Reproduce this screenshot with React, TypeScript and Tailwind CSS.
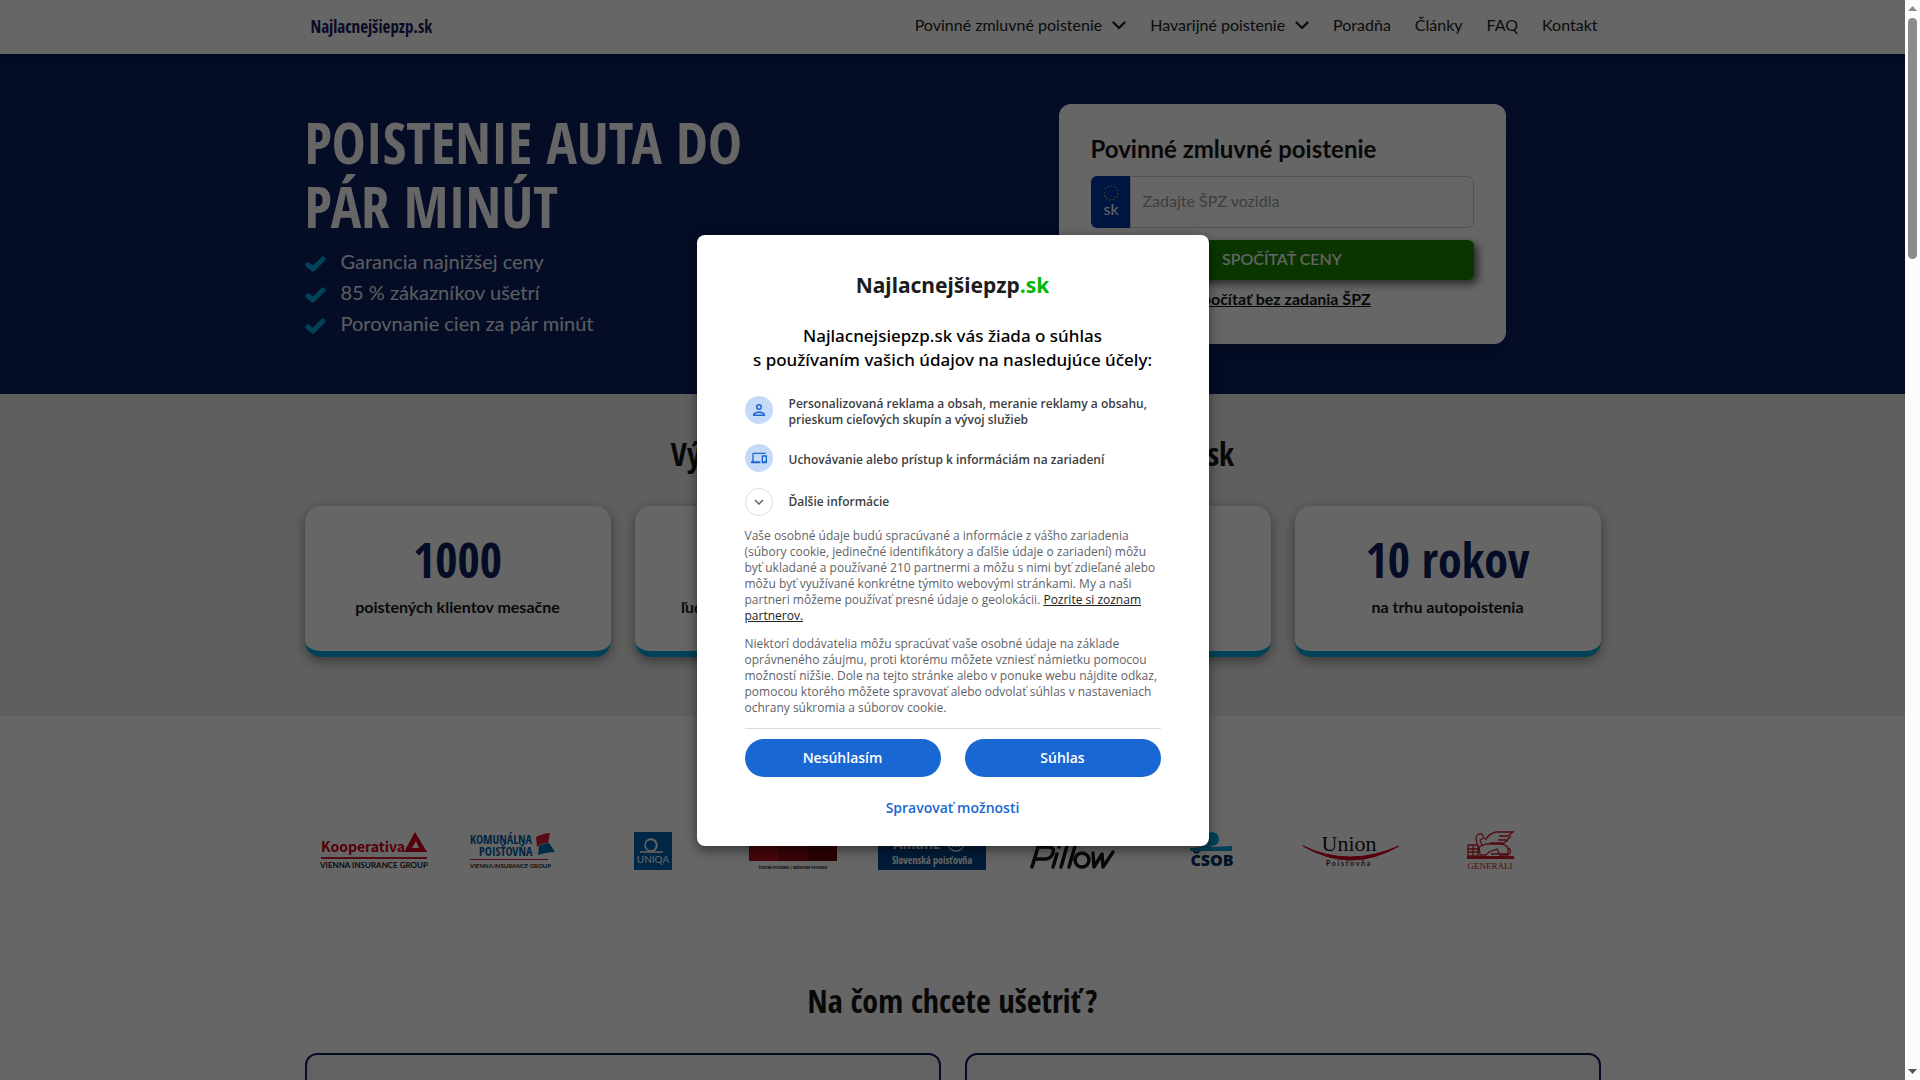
import type { ReactNode } from 'react';

const display = "font-['Liberation_Sans_Narrow','Open_Sans_Condensed','Roboto',sans-serif]";

function Chevron() {
  return (
    <svg width="14" height="9" viewBox="0 0 14 9" fill="none" stroke="currentColor" strokeWidth="2.4" strokeLinecap="round" strokeLinejoin="round" aria-hidden="true">
      <path d="M1.5 1.5 7 7l5.500-5.500" />
    </svg>
  );
}

function Check() {
  return (
    <svg width="21" height="16" viewBox="0 0 21 16" fill="none" stroke="#00a9dc" strokeWidth="5" strokeLinecap="round" strokeLinejoin="round" aria-hidden="true">
      <path d="M3 9l5 4L18 3" />
    </svg>
  );
}

function EuStars() {
  return (
    <svg width="16" height="16" viewBox="0 0 16 16" aria-hidden="true">
      <circle cx="8" cy="8" r="7" fill="none" stroke="#c9b83a" strokeWidth="1.300" strokeDasharray="1.200 2.465" />
    </svg>
  );
}

function Header() {
  const links = ['Poradňa', 'Články', 'FAQ', 'Kontakt'];
  return (
    <header className="relative z-10 bg-white shadow-md">
      <div className="mx-auto flex h-[54px] max-w-[1296px] items-center justify-between pr-[3px] pl-1.5">
        <a href="#" className={`${display} text-[17px] font-bold text-[#1a1a5e]`}>Najlacnejšiepzp.sk</a>
        <nav className="flex items-center gap-6 pb-1 text-[16px] text-[#222]">
          <a href="#" className="flex items-center gap-2.5">Povinné zmluvné poistenie <Chevron /></a>
          <a href="#" className="flex items-center gap-2.5">Havarijné poistenie <Chevron /></a>
          {links.map((l) => <a key={l} href="#">{l}</a>)}
        </nav>
      </div>
    </header>
  );
}

function Hero() {
  const points = ['Garancia najnižšej ceny', '85 % zákazníkov ušetrí', 'Porovnanie cien za pár minút'];
  return (
    <section className="bg-[#0b2060]">
      <div className="mx-auto flex max-w-[1296px] items-start justify-between py-[50px]">
        <div className="w-[500px] pt-1.5">
          <h1 className={`${display} text-[57px] leading-[64px] font-bold text-white`}>POISTENIE AUTA DO PÁR MINÚT</h1>
          <ul className="mt-2 text-[20px] leading-[31px] text-[#e4e8f0]">
            {points.map((p) => (
              <li key={p} className="flex items-center gap-[15px]"><span className="pt-1"><Check /></span>{p}</li>
            ))}
          </ul>
        </div>
        <form className="mr-[95px] h-[240px] w-[447px] rounded-xl bg-white px-8 pt-7 shadow-lg">
          <h2 className="text-[24px] leading-[34px] font-bold text-[#161616]">Povinné zmluvné poistenie</h2>
          <div className="mt-2.5 flex h-[52px]">
            <label htmlFor="spz" className="flex w-[39px] flex-col items-center justify-center rounded-l-md bg-[#0037a5] pb-0.5 pl-0.5 text-[16px] leading-[16px] text-white"><EuStars />sk</label>
            <input id="spz" placeholder="Zadajte ŠPZ vozidla" className="min-w-0 flex-1 rounded-r-md border border-[#ccc] px-3 pb-0.5 text-[16px] placeholder:text-[#9a9a9a]" />
          </div>
          <button type="button" className="mt-3 block h-10 w-full rounded-md bg-[#1a8500] pb-0.5 text-[16px] font-medium text-white shadow-[4px_4px_8px_rgba(0,0,0,0.6)]">SPOČÍTAŤ CENY</button>
          <a href="#" className="mt-[7px] block text-center text-[16px] font-bold text-[#161616] underline">Spočítať bez zadania ŠPZ</a>
        </form>
      </div>
    </section>
  );
}

function Stats() {
  const stats = [
    ['1000', 'poistených klientov mesačne'],
    ['50 000', 'ľudí už ušetrilo na poistení áut'],
    ['9', 'poisťovní'],
    ['10 rokov', 'na trhu autopoistenia'],
  ];
  return (
    <section className="bg-[#ededed] pt-9 pb-[59px]">
      <h2 className={`${display} text-center text-[32px] leading-[48px] font-bold text-[#161616]`}>Výhody poistenia auta cez Najlacnejšiepzp.sk</h2>
      <div className="mx-auto mt-7 grid max-w-[1296px] grid-cols-4 gap-6">
        {stats.map(([value, label]) => (
          <div key={value} className="flex h-[151px] flex-col items-center rounded-2xl border-b-[6px] border-[#00a9dc] bg-white pt-6 shadow-[0_4px_12px_rgba(0,0,0,0.4)]">
            <p className={`${display} text-[48px] leading-[60px] font-bold text-[#0b2060]`}>{value}</p>
            <p className="mt-[5px] text-[16px] font-bold text-[#161616]">{label}</p>
          </div>
        ))}
      </div>
    </section>
  );
}

function Logo({ name, width, height = 39, children }: { name: string; width: number; height?: number; children: ReactNode }) {
  return (
    <a href="#" aria-label={name}>
      <svg className="overflow-visible" width={width} height={height} viewBox={`0 0 ${width} ${height}`}>{children}</svg>
    </a>
  );
}

function Partners() {
  return (
    <section className="bg-white">
      <div className="mx-auto grid max-w-[1296px] grid-cols-9 items-center justify-items-center pt-[115px] pr-10 pb-[107px]">
        <Logo name="Kooperativa" width={106}>
          <text x="0" y="21" fontFamily="Noto Sans CJK SC" fontWeight="700" fontSize="14" fill="#d8001c">Kooperativa</text>
          <path fillRule="evenodd" d="M83 21 94 1l12 20zM91 17h7l-3-7z" fill="#d8001c" />
          <rect y="26" width="106" height="2" fill="#c8202c" />
          <text x="-1" y="37" fontFamily="Lato" fontWeight="700" fontSize="8" fill="#222">VIENNA INSURANCE GROUP</text>
        </Logo>
        <Logo name="Komunálna poisťovňa" width={88}>
          <text x="0" y="13" fontFamily="Open Sans Condensed" fontWeight="700" fontSize="12" fill="#005da8">KOMUNÁLNA</text>
          <text x="9" y="25" fontFamily="Open Sans Condensed" fontWeight="700" fontSize="12" fill="#005da8">POISŤOVŇA</text>
          <path d="M66 6q8-4 14-4l-2 10q-6 0-11 4z" fill="#d8202c" />
          <path d="M69 15q6-3 10-3l6 9q-9 0-17 3z" fill="#006bb5" />
          <rect y="28" width="78" height="1" fill="#c8202c" />
          <text x="0" y="37" fontFamily="Lato" fontWeight="700" fontSize="6" fill="#222">VIENNA INSURANCE GROUP</text>
        </Logo>
        <Logo name="UNIQA" width={38} height={38}>
          <rect width="38" height="38" fill="#0063ae" />
          <g fill="none" stroke="#fff" strokeWidth="1.500">
            <circle cx="17" cy="13" r="6" />
            <path d="M14 8a6 6 0 1 1 5 11M6 20h23" />
          </g>
          <text x="19" y="31" textAnchor="middle" fontFamily="Lato" fontSize="10" fill="#fff">UNIQA</text>
        </Logo>
        <Logo name="Životné poistenie, neživotné poistenie" width={88}>
          <rect width="30" height="30" fill="#b5121b" />
          <rect x="29" width="30" height="30" fill="#8f0c14" />
          <rect x="59" width="29" height="30" fill="#6c0008" />
          <text x="44" y="38" textAnchor="middle" fontFamily="Open Sans Condensed" fontWeight="700" fontSize="4" fill="#111">ŽIVOTNÉ POISTENIE | NEŽIVOTNÉ POISTENIE</text>
        </Logo>
        <Logo name="Allianz Slovenská poisťovňa" width={108}>
          <rect width="108" height="39" fill="#00478f" />
          <text x="15" y="18" fontFamily="Open Sans" fontWeight="700" fontSize="14" fill="#fff">Allianz</text>
          <circle cx="78" cy="12" r="8" fill="none" stroke="#fff" strokeWidth="1.500" />
          <path d="M75 8v8M78 7v9M81 8v8" stroke="#fff" strokeWidth="2" />
          <text x="54" y="33" textAnchor="middle" fontFamily="Open Sans Condensed" fontSize="10" fill="#fff">Slovenská poisťovňa</text>
        </Logo>
        <Logo name="Pillow" width={86}>
          <g fill="none" stroke="#161616" strokeWidth="3.500" strokeLinecap="round" strokeLinejoin="round">
            <path d="M3 36 9 16h10q7 0 5 6t-8 6H6M24 36l4-13M30 16l.3-1M32 36l6-21M40 36l6-21" />
            <ellipse cx="53" cy="29" rx="7" ry="7" />
            <path d="M64 22l1 14 8-13 1 13 10-15" />
          </g>
        </Logo>
        <Logo name="ČSOB" width={44}>
          <circle cx="22" cy="8" r="7" fill="#00a4dc" />
          <path d="M0 17q10 0 17-4l5 3 20-1v5H0z" fill="#00a4dc" />
          <text x="22" y="35" textAnchor="middle" fontFamily="Open Sans" fontWeight="800" fontSize="16" fill="#003366">ČSOB</text>
        </Logo>
        <Logo name="Union poisťovňa" width={98}>
          <text x="47" y="20" textAnchor="middle" fontFamily="Liberation Serif" fontSize="22" fill="#161616">Union</text>
          <path d="M1 15q46 22 96 0-48 28-96 0z" fill="#d8001c" stroke="#d8001c" />
          <text x="24" y="35" fontFamily="Lato" fontWeight="700" fontSize="7" fill="#333">P o i s ť o v ň a</text>
        </Logo>
        <Logo name="Generali" width={47}>
          <g fill="none" stroke="#c8202c" strokeWidth="1.300">
            <path d="M1 14h10v11H1zM1 18h10M1 21h10M6 14v11M10 14 9 7q1-5 6-4l2 4-4 2 2 5M13 24l-1-8 7-3h13q8 0 9 5v6h-8l-3-6-8 3-3 3zM18 9q5-7 11-8h17l-5 4h-9M44 5l-4 4h-9M41 9l-4 3H23M29 23h13q3-2 0-6M24 23h5" />
          </g>
          <path d="M0 25h47v3H0z" fill="#c8202c" />
          <text x="23" y="38" textAnchor="middle" fontFamily="Liberation Serif" fontSize="9" fill="#c8202c">GENERALI</text>
        </Logo>
      </div>
      <h2 className={`${display} text-center text-[32px] leading-[48px] font-bold text-[#161616]`}>Na čom chcete ušetriť?</h2>
      <div className="mx-auto mt-7 grid max-w-[1296px] grid-cols-2 gap-6">
        <div className="h-60 rounded-xl border-2 border-[#0b2060] bg-[#f6f6f6]" />
        <div className="h-60 rounded-xl border-2 border-[#0b2060] bg-[#f6f6f6]" />
      </div>
    </section>
  );
}

function ConsentDialog() {
  return (
    <div className="absolute inset-0 z-20 flex items-center justify-center bg-black/60">
      <div role="dialog" aria-modal="true" aria-labelledby="consent-title" className="w-[512px] rounded-lg bg-white px-12 pt-8 pb-[19px] font-['Open_Sans',sans-serif] shadow-[0_4px_12px_rgba(0,0,0,0.5)]">
        <p className="text-center font-['Noto_Sans',sans-serif] text-[21px] leading-[36px] font-bold text-[#1c1c1c]">Najlacnejšiepzp<span className="text-[#00b900]">.sk</span></p>
        <h2 id="consent-title" className="mt-[21px] text-center font-['Noto_Sans','Open_Sans',sans-serif] text-[17px] leading-[24px] font-medium whitespace-nowrap text-black">
          Najlacnejsiepzp.sk vás žiada o súhlas<br />s používaním vašich údajov na nasledujúce účely:
        </h2>
        <div className="mt-6 text-[12px] leading-[16px] font-semibold text-[#3c4043]">
          <div className="flex items-start gap-4">
            <span className="flex size-7 shrink-0 items-center justify-center rounded-full bg-[#c6daf8]">
              <svg width="18" height="18" viewBox="0 0 24 24" fill="#1967d2" aria-hidden="true"><path d="M12 6a2 2 0 1 1 0 4 2 2 0 0 1 0-4m0 10c2.700 0 5.800 1.290 6 2H6c.23-.72 3.310-2 6-2m0-12a4 4 0 1 0 0 8 4 4 0 0 0 0-8m0 10c-2.670 0-8 1.340-8 4v2h16v-2c0-2.660-5.330-4-8-4" /></svg>
            </span>
            <p>Personalizovaná reklama a obsah, meranie reklamy a obsahu, prieskum cieľových skupín a vývoj služieb</p>
          </div>
          <div className="mt-4 flex items-center gap-4">
            <span className="flex size-7 shrink-0 items-center justify-center rounded-full bg-[#c6daf8]">
              <svg width="16" height="16" viewBox="0 0 24 24" fill="#1967d2" aria-hidden="true"><path d="M4 6h18V4H4c-1.100 0-2 .9-2 2v11H0v3h14v-3H4zm19 2h-6c-.55 0-1 .45-1 1v10c0 .55.45 1 1 1h6c.55 0 1-.45 1-1V9c0-.55-.45-1-1-1m-1 9h-4v-7h4z" /></svg>
            </span>
            <p className="pt-1">Uchovávanie alebo prístup k informáciám na zariadení</p>
          </div>
          <button type="button" className="mt-4 flex items-center gap-4 font-semibold">
            <span className="flex size-7 items-center justify-center rounded-full border border-[#dadce0]">
              <svg width="18" height="18" viewBox="0 0 24 24" fill="#5f6368" aria-hidden="true"><path d="M7.410 8.590 12 13.170l4.590-4.580L18 10l-6 6-6-6z" /></svg>
            </span>
            Ďalšie informácie
          </button>
        </div>
        <div className="mt-3 text-[12px] leading-[16px] text-[#5f6368]">
          <p>Vaše osobné údaje budú spracúvané a informácie z vášho zariadenia (súbory cookie, jedinečné identifikátory a ďalšie údaje o zariadení) môžu byť ukladané a používané 210 partnermi a môžu s nimi byť zdieľané alebo môžu byť využívané konkrétne týmito webovými stránkami. My a naši partneri môžeme používať presné údaje o geolokácii. <a href="#" className="text-[#202124] underline">Pozrite si zoznam partnerov.</a></p>
          <p className="mt-3">Niektorí dodávatelia môžu spracúvať vaše osobné údaje na základe oprávneného záujmu, proti ktorému môžete vzniesť námietku pomocou možností nižšie. Dole na tejto stránke alebo v ponuke webu nájdite odkaz, pomocou ktorého môžete spravovať alebo odvolať súhlas v nastaveniach ochrany súkromia a súborov cookie.</p>
        </div>
        <div className="mt-3 grid grid-cols-2 gap-x-6 border-t border-[#dadce0] pt-2.5 text-[14px] font-semibold">
          <button type="button" className="h-[38px] rounded-full bg-[#1967d2] text-white">Nesúhlasím</button>
          <button type="button" className="h-[38px] rounded-full bg-[#1967d2] text-white">Súhlas</button>
          <button type="button" className="col-span-2 mt-3 h-[38px] text-[#1967d2]">Spravovať možnosti</button>
        </div>
      </div>
    </div>
  );
}

function Scrollbar() {
  return (
    <div className="flex w-[15px] shrink-0 flex-col items-center bg-[#fcfcfc] py-1.5" aria-hidden="true">
      <svg width="9" height="5" viewBox="0 0 9 5" fill="#8b8b8b"><path d="M4.500 0 9 5H0z" /></svg>
      <div className="mt-[7px] h-[241px] w-[9px] rounded-full bg-[#8b8b8b]" />
      <svg className="mt-auto" width="9" height="5" viewBox="0 0 9 5" fill="#555"><path d="M0 0h9L4.500 5z" /></svg>
    </div>
  );
}

export default function App() {
  return (
    <div className="flex h-screen overflow-hidden font-['Lato',sans-serif]">
      <div className="relative min-w-0 flex-1 overflow-hidden">
        <Header />
        <main>
          <Hero />
          <Stats />
          <Partners />
        </main>
        <ConsentDialog />
      </div>
      <Scrollbar />
    </div>
  );
}
